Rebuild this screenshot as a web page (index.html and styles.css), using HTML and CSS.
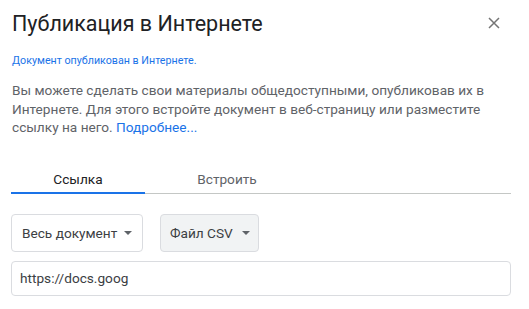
FILE: index.html
```
<!DOCTYPE html>
<html lang="ru">
<head>
<meta charset="utf-8">
<link rel="stylesheet" href="styles.css">
</head>
<body>
<div class="dialog">
  <div class="header">
    <h1 class="title">Публикация в Интернете</h1>
    <button class="close" aria-label="Закрыть">
      <svg width="12" height="12" viewBox="0 0 12 12"><path d="M1 1L11 11M11 1L1 11" stroke="#757575" stroke-width="1.5" fill="none"/></svg>
    </button>
  </div>
  <div class="status">Документ опубликован в Интернете.</div>
  <p class="desc">Вы можете сделать свои материалы общедоступными, опубликовав их в Интернете. Для этого встройте документ в веб-страницу или разместите ссылку на него. <a class="more" href="#">Подробнее...</a></p>
  <div class="tabs">
    <div class="tab active">Ссылка</div>
    <div class="tab second">Встроить</div>
  </div>
  <div class="controls">
    <div class="select doc">Весь документ<span class="caret"></span></div>
    <div class="select fmt">Файл CSV<span class="caret"></span></div>
  </div>
  <div class="url">https://docs.goog</div>
</div>
</body>
</html>
```
FILE: styles.css
```
html, body {
  margin: 0;
  padding: 0;
  background: #fff;
}
body {
  font-family: Roboto, "Noto Sans", sans-serif;
  color: #3c4043;
}
.dialog {
  width: 500px;
  padding: 0 18px 0 11px;
}
.header {
  display: flex;
  justify-content: space-between;
  align-items: flex-start;
  padding-top: 10px;
}
.title {
  margin: 0 0 0 1px;
  font-size: 21.5px;
  line-height: 28px;
  font-weight: 400;
  color: #202124;
}
.close {
  border: 0;
  background: none;
  padding: 0;
  margin: 7px 11px 0 0;
  width: 12px;
  height: 12px;
  display: flex;
}
.status {
  margin: 16px 0 0 1px;
  font-size: 10.7px;
  line-height: 14px;
  color: #1a73e8;
}
.desc {
  margin: 13px 0 0 1px;
  font-size: 13.65px;
  line-height: 18.5px;
  color: #5f6368;
}
.more {
  color: #1a73e8;
  text-decoration: none;
}
.tabs {
  display: flex;
  margin-top: 33px;
  border-bottom: 1px solid #c4c7c5;
}
.tab {
  font-size: 13.65px;
  line-height: 18px;
  padding: 0 0 5px;
  text-align: center;
  color: #5f6368;
  font-weight: 400;
}
.tab.active {
  width: 134px;
  color: #202124;
  border-bottom: 2px solid #1a73e8;
  margin-bottom: -1px;
  padding-bottom: 4px;
}
.tab.second {
  width: 164px;
}
.controls {
  display: flex;
  gap: 17px;
  margin-top: 20px;
}
.select {
  height: 36px;
  box-sizing: content-box;
  border: 1px solid #dadce0;
  border-radius: 4px;
  display: flex;
  align-items: center;
  font-size: 13.65px;
  color: #3c4043;
  background: #fff;
}
.select.doc {
  width: 110px;
  padding: 0 10px;
}
.select.fmt {
  width: 80px;
  padding: 0 8px 0 9px;
  background: #f1f3f4;
}
.caret {
  width: 0;
  height: 0;
  margin-left: auto;
  border-left: 4px solid transparent;
  border-right: 4px solid transparent;
  border-top: 4px solid #5f6368;
}
.url {
  margin-top: 9px;
  height: 33px;
  border: 1px solid #dadce0;
  border-radius: 4px;
  display: flex;
  align-items: center;
  padding-left: 8px;
  font-size: 13.65px;
  color: #3c4043;
}
```
